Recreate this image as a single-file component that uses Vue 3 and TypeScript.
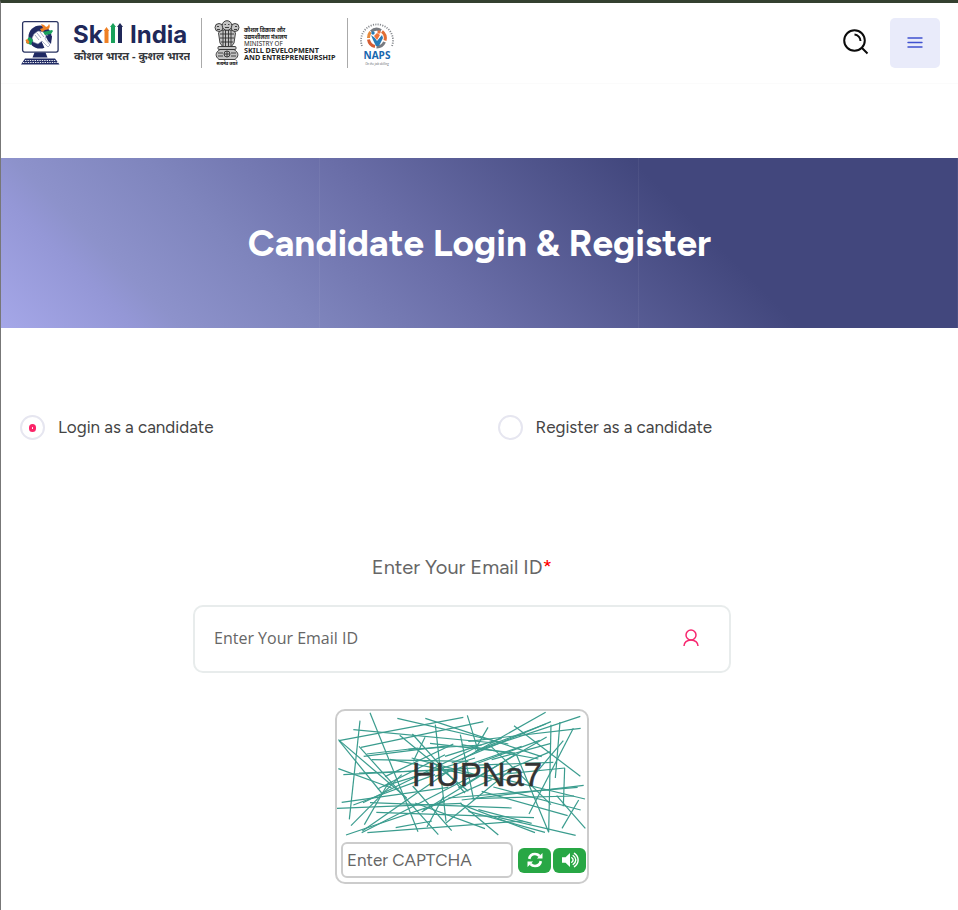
<script setup lang="ts">
import { ref } from 'vue'

type Mode = 'login' | 'register'

const mode = ref<Mode>('login')
const email = ref('')
const captcha = ref('')

const modes: { value: Mode; label: string }[] = [
  { value: 'login', label: 'Login as a candidate' },
  { value: 'register', label: 'Register as a candidate' },
]

// Noise strokes behind the captcha code: x1, y1, x2, y2
const strokes: number[][] = [
  [105, 14, 249, 371], [75, 38, 43, 334], [55, 65, 480, 105], [12, 98, 385, 28],
  [10, 95, 215, 270], [10, 182, 170, 240], [12, 98, 140, 255], [78, 118, 445, 41],
  [187, 31, 520, 108], [271, 31, 620, 146], [86, 145, 350, 112], [95, 138, 250, 120],
  [110, 155, 400, 160], [72, 195, 330, 186], [25, 200, 460, 178], [72, 115, 310, 380],
  [194, 82, 400, 250], [232, 78, 390, 255], [270, 88, 235, 160], [301, 50, 333, 340],
  [376, 80, 416, 275], [397, 22, 430, 130], [459, 58, 420, 125], [20, 283, 340, 238],
  [6, 301, 380, 286], [55, 291, 300, 200], [84, 284, 420, 120], [48, 353, 200, 200],
  [88, 350, 160, 225], [33, 381, 330, 280], [80, 374, 420, 200], [82, 369, 340, 190],
  [97, 374, 563, 339], [105, 284, 530, 300], [124, 313, 597, 329], [182, 359, 291, 339],
  [276, 357, 325, 266], [233, 234, 350, 368], [240, 285, 450, 362], [333, 345, 540, 175],
  [260, 312, 540, 140], [265, 306, 470, 215], [340, 270, 728, 238], [380, 276, 746, 232],
  [410, 272, 717, 264], [375, 285, 490, 381], [380, 290, 600, 374], [400, 310, 630, 373],
  [490, 328, 722, 382], [430, 305, 590, 346], [440, 250, 698, 323], [475, 237, 737, 306],
  [480, 208, 750, 273], [468, 115, 648, 290], [544, 139, 641, 373], [648, 50, 641, 373],
  [675, 42, 661, 210], [715, 61, 582, 318], [689, 180, 685, 295], [731, 276, 681, 361],
  [665, 263, 751, 361], [737, 61, 400, 100], [736, 25, 420, 130], [632, 13, 380, 155],
  [648, 41, 350, 165], [632, 48, 430, 125], [537, 53, 736, 205], [635, 87, 370, 240],
  [614, 97, 430, 165], [648, 106, 470, 155], [685, 98, 590, 210], [648, 130, 460, 210],
  [655, 163, 410, 172], [690, 180, 440, 205], [220, 124, 440, 111], [285, 106, 540, 135],
  [330, 145, 500, 91], [380, 110, 610, 153], [150, 206, 355, 108], [128, 243, 330, 140],
  [145, 235, 420, 150], [165, 154, 430, 205], [230, 150, 500, 220], [300, 205, 560, 115],
]
</script>

<template>
  <div class="page">
    <header class="header">
      <a class="brand" href="#" aria-label="Skill India">
        <svg class="monitor" viewBox="0 0 40 46" aria-hidden="true">
          <rect x="2.600" y="1.600" width="35.500" height="30.500" rx="2" fill="#fff" stroke="#293361" stroke-width="1.300" />
          <circle cx="20" cy="17" r="11.500" fill="#202a63" />
          <path d="m20 18 5 11 6-1 1-6-5-8z" fill="#fff" />
          <path d="m25 15 7 1-1 8-3-3z" fill="#202a63" />
          <path d="m12 18 2-4 4-3 6 1 2 4-1 3 5 6-2 2-6-6-4 3-5-2z" fill="#fff" stroke="#7b83a6" stroke-width=".6" />
          <path d="m15 15 4 5m-2-7 4 5m-1-6 4 5" fill="none" stroke="#7b83a6" stroke-width=".7" />
          <path d="m20 9 3-1-2-4 3 1 2 2 2-1 1-2c2 3 0 6-4 6l-3 2z" fill="#ee8025" />
          <path d="m23 12 9-2 1 1-2 3-6 1z" fill="#19a15b" />
          <path d="m8 18 2-1 3 3-2 5-5-2z" fill="#19a15b" />
          <path d="m5.500 20 2-1 2 3-1 2-2-1z" fill="#ee8025" />
          <path d="M14.500 32.500h11l2 5h-15zM5 38.500h30l4.500 6H1z" fill="#202a63" />
          <path d="M5 40.500h31M3 42.500h35" stroke="#fff" stroke-width=".9" stroke-dasharray="1.400 1" />
        </svg>
        <svg class="wordmark" viewBox="0 0 118 46" role="img" aria-label="Skill India">
          <g fill="#202859" font-family="Inter, sans-serif" font-size="24" font-weight="700">
            <text x="1" y="23">Sk</text>
            <text x="58" y="23">India</text>
          </g>
          <path d="M32.500 23V11h-.8l2.800-4 2.800 4h-.8v12z" fill="#ee8025" />
          <path d="M39 23V7h-1l3-4 3 4h-1v16z" fill="#19a15b" />
          <path d="M46 23V7h-1l3-4 3 4h-1v16z" fill="#202859" />
          <text x="2" y="40" fill="#35383d" font-family="'Noto Sans', 'Noto Sans Devanagari', sans-serif" font-size="11" font-weight="700">कौशल भारत - कुशल भारत</text>
        </svg>
      </a>
      <a class="brand ministry" href="#">
        <svg class="emblem" viewBox="0 0 26 46" aria-hidden="true">
          <g fill="#c4c4c4" stroke="#303030" stroke-width=".9">
            <path d="M7 10 4.500 13 6 23l3 4h8l3-4 1.500-10L19 10z" />
            <circle cx="5" cy="7.500" r="4" />
            <circle cx="21" cy="7.500" r="4" />
            <circle cx="13" cy="5.500" r="4.800" />
            <g fill="none">
              <path d="M9 10v16m2.500-16v16m3-16v16m2.500-16v16M6 14h14M6 18h14M7 22h12" />
              <path d="M10.500 4.500h1.500m2 0h1.500M11 7.500h4M3 6.500h2m16 0h2M3 9.500h3m14 0h3" />
            </g>
            <rect x="4" y="26.500" width="18" height="3" rx="1" />
            <path d="M6 29.500c-5 3-5 7-1 10h16c4-3 4-7-1-10z" />
            <circle cx="13" cy="34" r="3" />
            <path d="M4 33h5m8 0h5M4 36h5m8 0h5M13 31v6m-3-3h6" fill="none" />
          </g>
          <text x="13" y="45" text-anchor="middle" font-size="4" font-weight="700" font-family="'Noto Sans', sans-serif">सत्यमेव जयते</text>
        </svg>
        <svg class="ministry-text" viewBox="0 0 376 184" role="img" aria-label="Ministry of Skill Development and Entrepreneurship">
          <g fill="#252525" font-family="'Noto Sans', 'Open Sans', sans-serif" font-size="29">
            <text x="4" y="46" font-size="22" font-weight="700">कौशल विकास और</text>
            <text x="4" y="74" font-size="22" font-weight="700">उद्यमशीलता मंत्रालय</text>
            <text x="4" y="102" font-size="25">MINISTRY OF</text>
            <text x="4" y="130" font-weight="700">SKILL DEVELOPMENT</text>
            <text x="4" y="158" font-weight="700">AND ENTREPRENEURSHIP</text>
          </g>
        </svg>
      </a>
      <a class="brand naps" href="#">
        <svg class="naps-logo" viewBox="0 0 38 46" role="img" aria-label="NAPS, On the job skilling">
          <path d="M4 26A16 16 0 1 1 34 26" fill="none" stroke="#85888d" stroke-width="1.800" stroke-dasharray="1.100 1.300" />
          <g fill="none" stroke-width="3">
            <path d="M13 11.500A8.500 8.500 0 0 1 23 10.500" stroke="#777a80" />
            <path d="M24 11.500a8.500 8.500 0 0 1 3 9" stroke="#e16f35" />
            <path d="M26.500 22a8.500 8.500 0 0 1-8 5" stroke="#777a80" />
            <path d="M17 26.500a8.500 8.500 0 0 1-6.500-7" stroke="#d55c32" />
            <path d="M10.500 18a8.500 8.500 0 0 1 2-6" stroke="#e58a3c" />
          </g>
          <path d="m13 15 4 3 2 3 5-6 1 3-4 8h-3l-3-6z" fill="#267bb7" />
          <path d="m19 13 3 2-3 5-3-4z" fill="#ef7338" />
          <circle cx="15" cy="13" r="1.700" fill="#267bb7" />
          <circle cx="21" cy="12" r="1.700" fill="#ef7338" />
          <text x="19" y="39" text-anchor="middle" fill="#1766ae" font-family="Open Sans, sans-serif" font-size="10" font-weight="700">NAPS</text>
          <text x="19" y="45" text-anchor="middle" fill="#60646b" font-family="Open Sans, sans-serif" font-size="3" font-style="italic">On the job skilling</text>
        </svg>
      </a>
      <div class="actions">
        <button class="search" type="button" aria-label="Search">
          <svg viewBox="0 0 26 28" fill="none" stroke="#0b0b0b" stroke-width="2" aria-hidden="true">
            <circle cx="11.500" cy="11.500" r="10.300" />
            <path d="M11.500 5.500a6.500 6.500 0 0 1 6 6.500M19 19l5.500 5.500" />
          </svg>
        </button>
        <button class="menu" type="button" aria-label="Menu">
          <svg viewBox="0 0 16 12" stroke="#3f51d0" stroke-width="1.400" stroke-linecap="round" aria-hidden="true">
            <path d="M1 1h14M1 5.500h14M1 10h14" />
          </svg>
        </button>
      </div>
    </header>

    <section class="banner">
      <h1>Candidate Login &amp; Register</h1>
    </section>

    <main class="content">
      <div class="modes" role="radiogroup" aria-label="Candidate access">
        <label v-for="item in modes" :key="item.value" class="mode">
          <input v-model="mode" type="radio" name="mode" :value="item.value" />
          <span>{{ item.label }}</span>
        </label>
      </div>

      <form class="form" @submit.prevent>
        <label class="email-label" for="email">Enter Your Email ID<span class="required">*</span></label>
        <div class="email-field">
          <input id="email" v-model="email" type="email" placeholder="Enter Your Email ID" />
          <svg class="user" viewBox="0 0 16 18" fill="none" stroke="#f72870" stroke-width="1.500" aria-hidden="true">
            <circle cx="8" cy="6" r="5" />
            <path d="M1 17c0-3.500 3-6 7-6s7 2.500 7 6" />
          </svg>
        </div>

        <div class="captcha">
          <svg class="captcha-image" viewBox="0 0 250 126" role="img" aria-label="Captcha code">
            <g transform="scale(.33333) translate(-6 -9)" stroke="#3a9c8e" stroke-width="3.600">
              <line v-for="(s, i) in strokes" :key="i" :x1="s[0]" :y1="s[1]" :x2="s[2]" :y2="s[3]" />
            </g>
            <text x="75" y="75" fill="#333" stroke="#333" stroke-width=".4" font-family="Liberation Sans, Arial, sans-serif" font-size="33">HUPNa7</text>
          </svg>
          <div class="captcha-row">
            <input v-model="captcha" type="text" placeholder="Enter CAPTCHA" aria-label="Enter CAPTCHA" />
            <button type="button" aria-label="Refresh captcha">
              <svg viewBox="0 0 512 512" fill="none" stroke="#fff" stroke-width="86" aria-hidden="true">
                <path d="M70 220C88 125 168 64 256 64c58 0 108 24 145 64M442 292c-18 95-98 156-186 156-58 0-108-24-145-64" />
                <path d="M496 32v178H318zM16 480V302h178z" fill="#fff" stroke="none" />
              </svg>
            </button>
            <button type="button" aria-label="Play captcha audio">
              <svg viewBox="0 0 20 18" fill="none" stroke="#fff" stroke-width="1.600" stroke-linecap="round" aria-hidden="true">
                <path d="M1 6h4l5-5v16l-5-5H1z" fill="#fff" stroke="none" />
                <path d="M12 6.500c2 1.500 2 3.500 0 5M13.500 4c4 3 4 7 0 10M15 1.500c5.500 4 5.500 11 0 15" />
              </svg>
            </button>
          </div>
        </div>
      </form>
    </main>
  </div>
</template>

<style>
body {
  margin: 0;
  background: #fff;
}
</style>

<style scoped>
* {
  box-sizing: border-box;
}

.page {
  min-height: 100vh;
  overflow: hidden;
  border-top: 3px solid #344030;
  border-left: 1px solid #777;
  font-family: Figtree, Lato, sans-serif;
  color: #444;
}

svg {
  display: block;
}

button {
  display: flex;
  align-items: center;
  justify-content: center;
  padding: 0;
  border: 0;
  cursor: pointer;
}

.header {
  display: flex;
  align-items: center;
  height: 80px;
  padding: 0 18px 0 19px;
  box-shadow: 0 1px 1px #fbfbfb;
}

.brand {
  display: flex;
  align-items: center;
  height: 50px;
}

.monitor {
  width: 40px;
  height: 46px;
}

.wordmark {
  width: 118px;
  height: 46px;
  margin-left: 12px;
}

.ministry,
.naps {
  margin-left: 11px;
  border-left: 1px solid #aaa;
}

.emblem {
  width: 26px;
  height: 46px;
  margin-left: 12px;
}

.ministry-text {
  width: 94px;
  height: 46px;
  margin-left: 3px;
}

.naps {
  margin-left: 10px;
}

.naps-logo {
  width: 38px;
  height: 46px;
  margin-left: 10px;
}

.actions {
  display: flex;
  align-items: center;
  gap: 21px;
  margin-left: auto;
}

.search {
  background: none;
}

.search svg {
  width: 26px;
  height: 28px;
}

.menu {
  width: 50px;
  height: 50px;
  border-radius: 5px;
  background: #e9ebfa;
}

.menu svg {
  width: 16px;
  height: 12px;
}

.banner {
  display: flex;
  align-items: center;
  justify-content: center;
  height: 170px;
  margin-top: 75px;
  background:
    repeating-linear-gradient(90deg, transparent 0 calc(33.333% - 1px), rgb(255 255 255 / 5%) calc(33.333% - 1px) 33.333%),
    linear-gradient(45deg, #a5a7e8 0%, #9497d6 12%, #8d92cb 16%, #7f85bd 28%, #6a6ea8 44%, #42477d 71%);
}

h1 {
  margin: 0;
  color: #fff;
  font-size: 37px;
  line-height: 48px;
  font-weight: 700;
}

.content {
  padding: 86px 0 0;
}

.modes {
  display: grid;
  grid-template-columns: 1fr 1fr;
  padding-right: 2px;
}

.mode {
  display: flex;
  align-items: center;
  gap: 13px;
  padding-left: 19px;
  font-size: 17px;
  line-height: 27px;
}

.mode input {
  display: grid;
  place-items: center;
  width: 25px;
  height: 25px;
  margin: 0;
  appearance: none;
  border: 2px solid #e6e6f0;
  border-radius: 50%;
  background: #fff;
}

.mode input:checked::after {
  content: '';
  box-sizing: border-box;
  width: 7px;
  height: 8px;
  border: 3px solid #fb2468;
  border-radius: 4px;
}

.form {
  display: flex;
  flex-direction: column;
  align-items: center;
  padding: 111px 35px 26px 0;
}

.email-label {
  color: #666;
  font-size: 20px;
  line-height: 30px;
}

.required {
  color: #f00;
}

.email-field {
  display: flex;
  align-items: center;
  width: 100%;
  max-width: 538px;
  height: 68px;
  margin-top: 23px;
  padding: 0 30px 3px 19px;
  border: 2px solid #e8ecec;
  border-radius: 10px;
}

.email-field input {
  flex: 1;
  min-width: 0;
  padding: 0;
  border: 0;
  outline: 0;
  background: none;
  color: #444;
  font: 16px/24px 'Open Sans', 'Noto Sans', sans-serif;
}

input::placeholder {
  color: #666;
  opacity: 1;
}

.user {
  width: 16px;
  height: 18px;
}

.captcha {
  width: 254px;
  margin-top: 36px;
  border: 2px solid #ccc;
  border-radius: 10px;
}

.captcha-image {
  width: 100%;
}

.captcha-row {
  display: flex;
  align-items: center;
  gap: 2px;
  padding: 5px 1px 4px 4px;
}

.captcha-row input {
  flex: 1;
  min-width: 0;
  height: 36px;
  margin-right: 3px;
  padding: 0 4px;
  border: 2px solid #ccc;
  border-radius: 6px;
  color: #444;
  font: 17px/28px Figtree, Lato, sans-serif;
}

.captcha-row button {
  width: 33px;
  height: 25px;
  border-radius: 6px;
  background: #28a745;
}

.captcha-row button svg {
  width: 18px;
  height: 16px;
}
</style>
